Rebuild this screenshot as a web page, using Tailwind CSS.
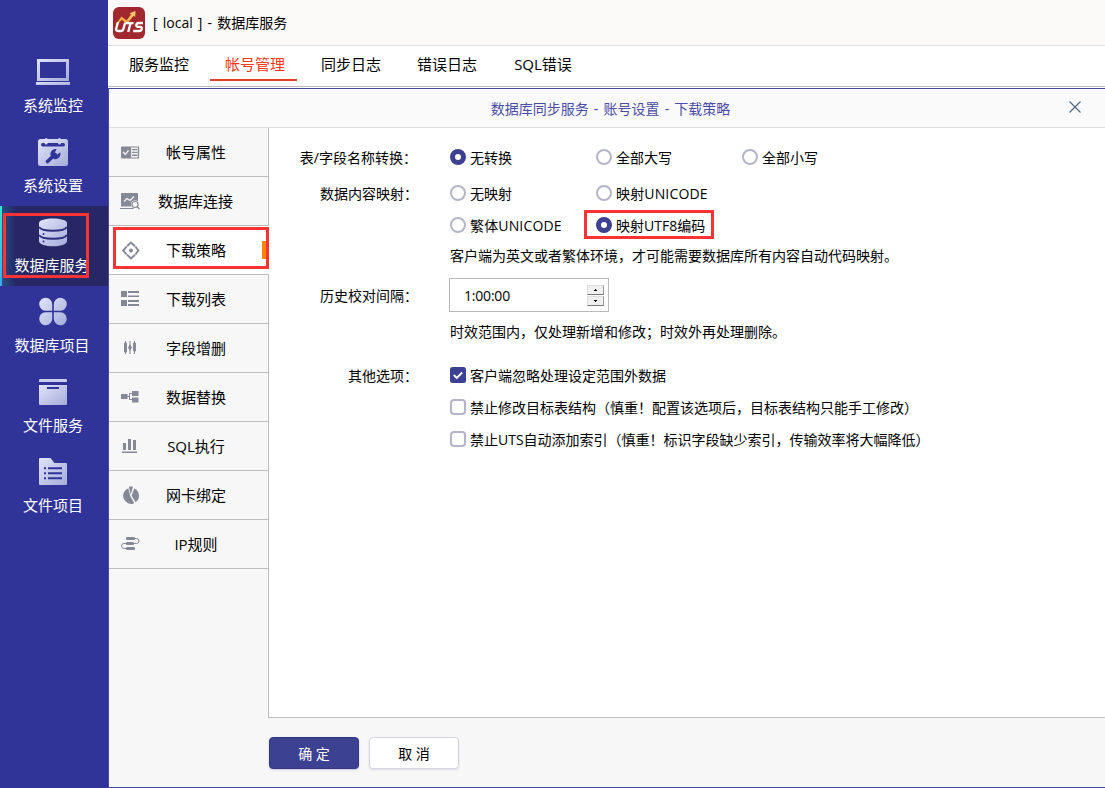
<!DOCTYPE html>
<html lang="zh-CN">
<head>
<meta charset="utf-8">
<title>数据库服务</title>
<script src="https://cdn.jsdelivr.net/npm/@tailwindcss/browser@4"></script>
</head>
<body class="w-[1105px] h-[788px] overflow-hidden bg-white text-black text-[14px] leading-5 font-['Open_Sans','Noto_Sans_CJK_SC',sans-serif]">
<svg class="absolute w-0 h-0" aria-hidden="true">
  <defs>
    <linearGradient id="g" x1="0" y1="0" x2="1" y2="1"><stop offset="0" stop-color="#e2e4fb"/><stop offset="1" stop-color="#a4acd9"/></linearGradient>
    <linearGradient id="arrow" x1="0" y1="1" x2="1" y2="0"><stop offset="0" stop-color="#f2a33a"/><stop offset="1" stop-color="#ffcf6b"/></linearGradient>
  </defs>
</svg>
<div class="flex h-[788px] relative">
  <nav class="w-[108px] shrink-0 bg-[#303498] pt-[46px] text-white text-[15px] relative">
    <a class="flex flex-col items-center h-20 pr-[2px]">
      <svg class="w-[34px] h-[34px] mt-[9px] shrink-0" viewBox="0 0 34 34" fill="url(#g)"><path fill-rule="evenodd" d="M1 4h32v22H1zM4 7v16h26V7z"/><path d="M0 27h34v3H0z"/></svg>
      <span class="mt-[6px]">系统监控</span>
    </a>
    <a class="flex flex-col items-center h-20 pr-[2px]">
      <svg class="w-[34px] h-[34px] mt-[9px] shrink-0" viewBox="0 0 34 34"><rect x="2" y="4" width="30" height="27" rx="2.500" fill="url(#g)"/><rect x="5" y="8" width="24" height="3.400" rx="1.700" fill="#303498"/><rect x="8.600" y="3" width="3" height="6.500" rx="1.500" fill="#dcdff8"/><rect x="22" y="3" width="3" height="6.500" rx="1.500" fill="#cdd1ef"/><path d="M11.500 26.500l7.500-7" stroke="#303498" stroke-width="3.600" stroke-linecap="round"/><path d="M20.700 14.300a5 5 0 1 0 3.500 6.200 5 5 0 0 0 0-3.200l-3 2.400-2.600-2z" fill="#303498"/></svg>
      <span class="mt-[6px]">系统设置</span>
    </a>
    <a class="flex flex-col items-center h-20 pr-[2px] relative bg-[#262764] bg-[linear-gradient(90deg,#295286_0px,#262764_16px)]">
      <span class="absolute left-0 top-0 w-[2px] h-20 bg-linear-to-b from-[#34e5cf] to-[#3fa9f0]"></span>
      <svg class="w-[34px] h-[34px] mt-[9px] shrink-0" viewBox="0 0 34 34"><path d="M3 8c0-6 28-6 28 0v18c0 7-28 7-28 0z" fill="url(#g)"/><path d="M3 12c3 5 25 5 28 0M3 20c3 5 25 5 28 0" fill="none" stroke="#2a2c7c" stroke-width="1.800"/><circle cx="7.500" cy="19" r="1" fill="#303498"/><circle cx="7.500" cy="26.500" r="1" fill="#303498"/></svg>
      <span class="mt-[6px] mr-[2px]">数据库服务</span>
    </a>
    <a class="flex flex-col items-center h-20 pr-[2px]">
      <svg class="w-[34px] h-[34px] mt-[9px] shrink-0" viewBox="0 0 34 34" fill="url(#g)"><path d="M16.200 15.700H9.500a6.500 6.500 0 1 1 6.700-6.500zM17.800 15.700h6.700a6.500 6.500 0 1 0-6.700-6.500zM16.200 17.300H9.500a6.500 6.500 0 1 0 6.700 6.500zM17.800 17.300h6.700a6.500 6.500 0 1 1-6.700 6.500z"/></svg>
      <span class="mt-[6px] mr-[2px]">数据库项目</span>
    </a>
    <a class="flex flex-col items-center h-20 pr-[2px]">
      <svg class="w-[34px] h-[34px] mt-[9px] shrink-0" viewBox="0 0 34 34" fill="url(#g)"><path d="M3 7V5q0-1 1-1h26q1 0 1 1v2z" fill="#c9ceef"/><path d="M3 10h28v19q0 1-1 1H4q-1 0-1-1z"/><path d="M11 12h12v2H11z" fill="#303498"/></svg>
      <span class="mt-[6px]">文件服务</span>
    </a>
    <a class="flex flex-col items-center h-20 pr-[2px]">
      <svg class="w-[34px] h-[34px] mt-[9px] shrink-0" viewBox="0 0 34 34"><path d="M4 3h10.500l4 5H30q1 0 1 1v20q0 1-1 1H4q-1 0-1-1V4q0-1 1-1z" fill="url(#g)"/><path d="M8 12.200h2v2H8zM12 12.200h14v2H12zM8 17.200h2v2H8zM12 17.200h14v2H12zM8 22.200h2v2H8zM12 22.200h14v2H12z" fill="#303498"/></svg>
      <span class="mt-[6px]">文件项目</span>
    </a>
  </nav>

  <div class="flex-1 min-w-0 flex flex-col">
    <header class="h-[46px] shrink-0 border-b border-[#dddddd] bg-[#fbfaf9] flex items-center pl-[5px] gap-2">
      <svg class="w-8 h-8" viewBox="0 0 32 32"><rect width="32" height="32" rx="6" fill="#a1282f"/><path d="M3 17l5.500-7.500 5 4 4.500-6-1.500-1.200 6-2.300-.3 6-1.600-1.200-6.600 8.200-5.200-4.200-3.800 4.200z" fill="url(#arrow)"/><g fill="none" stroke="#fff" stroke-width="2.300"><path d="M5 15l-1.800 6.500q-.6 2.500 2 2.500h2.500q2.200 0 2.700-2l1.800-6.500M13 16.200h7.500M17.500 16.200l-2.300 8.800M30 16h-4.500q-1.800 0-2.200 1.800-.4 2 1.700 2h2.200q2 0 1.500 2.200-.4 2-2.500 2h-6"/></g></svg>
      <span class="whitespace-pre [word-spacing:1.5px]">[ local ] - 数据库服务</span>
    </header>
    <div class="h-[41px] shrink-0 border-b border-[#bcbcbc] flex pl-[3px] text-[15px]">
      <a class="w-24 flex justify-center pt-2">服务监控</a>
      <a class="w-24 flex flex-col items-center text-[#f93a16] pt-2"><span>帐号管理</span><span class="w-[87px] h-[2px] mt-[5px] mr-[3px] bg-[#e5402b]"></span></a>
      <a class="w-24 flex justify-center pt-2">同步日志</a>
      <a class="w-24 flex justify-center pt-2">错误日志</a>
      <a class="w-24 flex justify-center pt-2">SQL错误</a>
    </div>
    <section class="mt-px flex-1 min-h-0 border-l border-y border-[#4547a0] bg-[#f7f7f7] flex flex-col">
      <div class="h-[39px] shrink-0 border-b border-[#dddddd] bg-[#fafafa] flex items-center text-[#4a4da6]">
        <span class="flex-1 text-center pl-[43px] pt-[2px] [word-spacing:1.5px]">数据库同步服务 - 账号设置 - 下载策略</span>
        <svg class="w-3 h-3 mr-[24px] mb-[3px]" viewBox="0 0 12 12" stroke="#566880" stroke-width="1.200"><path d="M.5.500l11 11M11.500.500l-11 11"/></svg>
      </div>
      <div class="flex h-[590px] shrink-0">
        <aside class="w-[160px] shrink-0 flex flex-col text-[15px]">
          <div class="h-[49px] border-b border-r border-[#bdbdbd] flex items-center pl-3"><svg class="w-[19px] h-[19px]" viewBox="0 0 19 19" fill="#858896"><path d="M0 4.500q0-1 1-1h8v12H1q-1 0-1-1z"/><path d="M2 9l2.300 2.300L7.500 7.500" fill="none" stroke="#f7f7f7" stroke-width="1.300"/><path d="M9.500 4h8v11h-8z" fill="#f7f7f7" stroke="#858896" stroke-width="1.200"/><path d="M11 6h5.500v1.300H11zM11 8.800h5.500v1.300H11zM11 11.600h5.500v1.300H11z"/></svg><span class="w-[112px] text-center">帐号属性</span></div>
          <div class="h-[49px] border-b border-r border-[#bdbdbd] flex items-center pl-3"><svg class="w-[19px] h-[19px] overflow-visible" viewBox="0 0 19 19" fill="#858896"><path d="M0 2q0-1 1-1h15q1 0 1 1v12.500H0zM-1 16h14v1H-1z"/><path d="M3 9.500l3-3 3 2 4-4" fill="none" stroke="#f7f7f7" stroke-width="1.300"/><circle cx="14" cy="12.500" r="3.300" fill="#f7f7f7" stroke="#f7f7f7" stroke-width="1.500"/><circle cx="14" cy="12.500" r="3" fill="none" stroke="#858896" stroke-width="1.200"/><path d="M16 14.500l2.500 2.500" stroke="#858896" stroke-width="1.300"/></svg><span class="w-[111px] text-center">数据库连接</span></div>
          <div class="h-[49px] border-b border-[#bdbdbd] bg-white flex items-center pl-3"><svg class="w-[19px] h-[19px]" viewBox="0 0 19 19" fill="none" stroke="#858896" stroke-width="1.900"><path d="M6 5.300l4-3.800 4 3.800M14.400 5.700l3 3.800-3 3.800M14 13.700l-4 3.800-4-3.800M5.600 13.300l-3.400-3.800 3.400-3.800"/><circle cx="10" cy="9.500" r="2" fill="#858896" stroke="none"/></svg><span class="w-[112px] text-center">下载策略</span><span class="w-[6px] h-[18px] ml-[10px] bg-[#ff8500]"></span></div>
          <div class="h-[49px] border-b border-r border-[#bdbdbd] flex items-center pl-3 pb-[2px]"><svg class="w-[19px] h-[19px]" viewBox="0 0 19 19" fill="#858896"><path d="M0 2h6v6H0zM0 11h6v6H0zM7 2h11v2H7zM7 6.500h11V8H7zM7 11h11v2H7zM7 15h11v2H7z"/></svg><span class="w-[112px] text-center pt-[2px]">下载列表</span></div>
          <div class="h-[49px] border-b border-r border-[#bdbdbd] flex items-center pl-3 pb-[2px]"><svg class="w-[19px] h-[19px]" viewBox="0 0 19 19" fill="#858896"><path d="M4 3h1v13H4zM8.500 3h1v13h-1zM13 3h1v13h-1z"/><rect x="3" y="4.500" width="3" height="10" rx="1"/><path d="M9 6l2 3.500-2 3.500-2-3.500z"/><rect x="12" y="4.500" width="3" height="9" rx="1"/></svg><span class="w-[112px] text-center pt-[2px]">字段增删</span></div>
          <div class="h-[49px] border-b border-r border-[#bdbdbd] flex items-center pl-3 pb-[2px]"><svg class="w-[19px] h-[19px]" viewBox="0 0 19 19" fill="#858896"><path d="M0 7h6.500v5H0zM11 4h6.500v5H11zM11 10.500h6.500v5H11z"/><path d="M6 9.500h2M11 6.500H8.500v6H11" fill="none" stroke="#858896"/></svg><span class="w-[112px] text-center pt-[2px]">数据替换</span></div>
          <div class="h-[49px] border-b border-r border-[#bdbdbd] flex items-center pl-3 pb-[2px]"><svg class="w-[19px] h-[19px]" viewBox="0 0 19 19" fill="#858896"><path d="M2 7h3v7H2zM7 3h3v11H7zM12 4h3v10h-3zM1 15.500h15v1.500H1z"/></svg><span class="w-[112px] text-center pt-[2px]">SQL执行</span></div>
          <div class="h-[49px] border-b border-r border-[#bdbdbd] flex items-center pl-3"><svg class="w-[19px] h-[19px]" viewBox="0 0 19 19" fill="#858896"><path d="M9.300 10.300L7.300 2.200A8 8 0 1 0 13.300 17.300z"/><path d="M9.700 8.500L7.800.8q2-.8 4.200 0z"/><path d="M10.600 9.800l2.600-7.300a8 8 0 0 1 1.400 13.800z"/></svg><span class="w-[112px] text-center">网卡绑定</span></div>
          <div class="h-[49px] border-b border-r border-[#bdbdbd] flex items-center pl-3 pb-[2px]"><svg class="w-[19px] h-[19px]" viewBox="0 0 19 19" fill="#858896"><rect x="5" y="3" width="9" height="3" rx="1"/><rect x="5" y="8" width="8" height="3" rx="1"/><rect x="5" y="13" width="9" height="3" rx="1"/><path d="M14 4.500h1.500a2.500 2.500 0 0 1 0 5H13M5 9.500H3a2.500 2.500 0 0 0 0 5h2" fill="none" stroke="#858896"/></svg><span class="w-[112px] text-center pt-[2px]">IP规则</span></div>
          <div class="flex-1 border-r border-[#bdbdbd]"></div>
        </aside>
        <main class="flex-1 bg-white border-b border-[#bdbdbd] pt-[11px]">
          <div class="flex items-center h-9">
            <span class="w-[148px] text-right pt-[2px]">表/字段名称转换：</span>
            <label class="flex items-center gap-1 ml-[33px] w-[146px]"><i class="size-4 rounded-full border-[5px] border-[#3d4191] bg-white"></i><span class="pt-[2px]">无转换</span></label>
            <label class="flex items-center gap-1 w-[146px]"><i class="size-4 rounded-full border-2 border-[#b5b5c9]"></i><span class="pt-[2px]">全部大写</span></label>
            <label class="flex items-center gap-1"><i class="size-4 rounded-full border-2 border-[#b5b5c9]"></i><span class="pt-[2px]">全部小写</span></label>
          </div>
          <div class="flex items-center h-9">
            <span class="w-[149px] text-right pt-[2px]">数据内容映射：</span>
            <label class="flex items-center gap-1 ml-[32px] w-[146px]"><i class="size-4 rounded-full border-2 border-[#b5b5c9]"></i><span class="pt-[2px]">无映射</span></label>
            <label class="flex items-center gap-1"><i class="size-4 rounded-full border-2 border-[#b5b5c9]"></i><span class="pt-[2px] tracking-[0.15px]">映射UNICODE</span></label>
          </div>
          <div class="flex items-center h-7 pl-[181px]">
            <label class="flex items-center gap-1 w-[146px]"><i class="size-4 rounded-full border-2 border-[#b5b5c9]"></i><span class="pt-[2px] tracking-[0.15px]">繁体UNICODE</span></label>
            <label class="relative flex items-center gap-1"><i class="size-4 rounded-full border-[5px] border-[#3d4191] bg-white"></i><span class="pt-[2px]">映射UTF8编码</span><span class="absolute -left-3 -top-[4px] w-[130px] h-[29px] border-3 border-[#fb3335]"></span></label>
          </div>
          <p class="h-[34px] flex items-center pl-[181px]">客户端为英文或者繁体环境，才可能需要数据库所有内容自动代码映射。</p>
          <div class="flex items-center mt-[5px] h-[34px]">
            <span class="w-[149px] text-right pt-[2px]">历史校对间隔：</span>
            <div class="ml-[31px] w-[160px] h-[34px] border border-[#b9b9b9] flex items-center justify-between pl-[14px] pr-1">
              <span class="pt-[2px] tracking-[-0.2px]">1:00:00</span>
              <span class="flex flex-col w-[17px] h-[21px] gap-px">
                <i class="flex-1 bg-[#f0f0f0] border border-[#dedede] border-r-[#999] border-b-[#777] flex items-center justify-center"><svg class="w-[3px] h-[2px]" viewBox="0 0 3 2"><path d="M0 2h3v-1H2V0H1v1H0z"/></svg></i>
                <i class="flex-1 bg-[#f0f0f0] border border-[#dedede] border-r-[#999] border-b-[#777] flex items-center justify-center"><svg class="w-[3px] h-[2px]" viewBox="0 0 3 2"><path d="M0 0h3v1H2v1H1V1H0z"/></svg></i>
              </span>
            </div>
          </div>
          <p class="h-10 flex items-center pl-[181px]">时效范围内，仅处理新增和修改；时效外再处理删除。</p>
          <div class="flex items-center mt-[7px] h-8">
            <span class="w-[149px] text-right pt-[2px]">其他选项：</span>
            <label class="flex items-center gap-1 ml-[32px]"><svg class="size-4" viewBox="0 0 16 16"><rect width="16" height="16" rx="2.500" fill="#3d4191"/><path d="M3.800 8l3 3 5.400-5.500" fill="none" stroke="#fff" stroke-width="1.800"/></svg><span class="pt-[2px]">客户端忽略处理设定范围外数据</span></label>
          </div>
          <label class="flex items-center gap-1 h-8 pl-[181px]"><i class="size-4 rounded-[4px] border-2 border-[#b5b5c9]"></i><span class="pt-[2px]">禁止修改目标表结构（慎重！配置该选项后，目标表结构只能手工修改）</span></label>
          <label class="flex items-center gap-1 h-8 pl-[181px]"><i class="size-4 rounded-[4px] border-2 border-[#b5b5c9]"></i><span class="pt-[2px]">禁止UTS自动添加索引（慎重！标识字段缺少索引，传输效率将大幅降低）</span></label>
        </main>
      </div>
      <footer class="flex gap-[10px] pl-[160px] pt-[19px]">
        <button class="w-[90px] h-8 rounded-[4px] bg-[#3d4191] border border-[#34377f] text-white pt-[2px] shadow-[0_1px_2px_#c9c9e6]">确 定</button>
        <button class="w-[90px] h-8 rounded-[4px] bg-white border border-[#d5d5e2] pt-[2px] shadow-[0_1px_2px_#dcdcea]">取 消</button>
      </footer>
    </section>
  </div>
  <span class="absolute left-[3px] top-[213px] w-[86px] h-[65px] border-3 border-[#fb3335]"></span>
  <span class="absolute left-[113px] top-[227px] w-[156px] h-[42px] border-3 border-[#fb3335]"></span>
</div>
</body>
</html>
